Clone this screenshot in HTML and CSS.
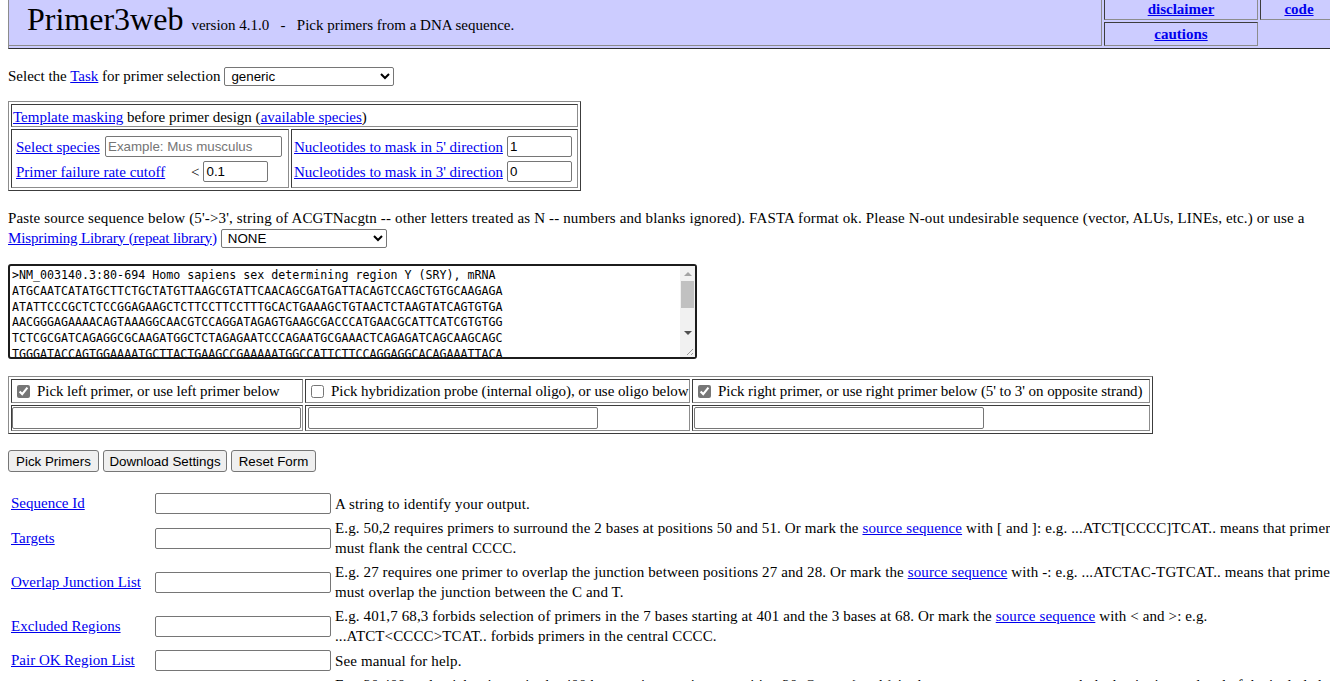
FILE: index.html
```html
<!DOCTYPE html>
<html lang="en">
<head>
<meta charset="utf-8">
<title>Primer3web version 4.1.0 - Pick primers from a DNA sequence</title>
<link rel="stylesheet" href="styles.css">
</head>
<body>
<header class="hdr">
  <div class="hdr-title"><span class="logo">Primer3web</span><span class="ver">version 4.1.0&nbsp;&nbsp; -&nbsp;&nbsp; Pick primers from a DNA sequence.</span></div>
  <div class="hdr-cell hdr-disc"><a href="#">disclaimer</a></div>
  <div class="hdr-cell hdr-code"><a href="#">code</a></div>
  <div class="hdr-cell hdr-caut"><a href="#">cautions</a></div>
</header>

<main class="page">
  <div class="taskrow">
    <span>Select the <a href="#">Task</a> for primer selection</span>
    <select class="sel sel-task"><option>generic</option></select>
  </div>

  <div class="mask">
    <div class="mcell mhead"><a href="#">Template masking</a> before primer design (<a href="#">available species</a>)</div>
    <div class="mcell mleft">
      <div class="mrow"><span class="ml w89"><a href="#">Select species</a></span><input class="inp w177" placeholder="Example: Mus musculus"></div>
      <div class="mrow"><span class="ml w175"><a href="#">Primer failure rate cutoff</a></span><span class="lt">&lt;</span><input class="inp w65" value="0.1"></div>
    </div>
    <div class="mcell mright">
      <div class="mrow"><span class="ml w213"><a href="#">Nucleotides to mask in 5' direction</a></span><input class="inp w65" value="1"></div>
      <div class="mrow"><span class="ml w213"><a href="#">Nucleotides to mask in 3' direction</a></span><input class="inp w65" value="0"></div>
    </div>
  </div>

  <div class="paste1">Paste source sequence below (5'-&gt;3', string of ACGTNacgtn -- other letters treated as N -- numbers and blanks ignored). FASTA format ok. Please N-out undesirable sequence (vector, ALUs, LINEs, etc.) or use a</div>
  <div class="paste2"><a class="mislib" href="#">Mispriming Library (repeat library)</a><select class="sel sel-lib"><option>NONE</option></select></div>

  <div class="ta-wrap">
    <textarea class="seq" spellcheck="false">&gt;NM_003140.3:80-694 Homo sapiens sex determining region Y (SRY), mRNA
ATGCAATCATATGCTTCTGCTATGTTAAGCGTATTCAACAGCGATGATTACAGTCCAGCTGTGCAAGAGA
ATATTCCCGCTCTCCGGAGAAGCTCTTCCTTCCTTTGCACTGAAAGCTGTAACTCTAAGTATCAGTGTGA
AACGGGAGAAAACAGTAAAGGCAACGTCCAGGATAGAGTGAAGCGACCCATGAACGCATTCATCGTGTGG
TCTCGCGATCAGAGGCGCAAGATGGCTCTAGAGAATCCCAGAATGCGAAACTCAGAGATCAGCAAGCAGC
TGGGATACCAGTGGAAAATGCTTACTGAAGCCGAAAAATGGCCATTCTTCCAGGAGGCACAGAAATTACA</textarea>
    <div class="sb" aria-hidden="true">
      <div class="sb-btn"><span class="tri-up"></span></div>
      <div class="sb-thumb"></div>
      <div class="sb-track"></div>
      <div class="sb-btn"><span class="tri-down"></span></div>
      <div class="sb-corner"><svg width="15" height="17" viewBox="0 0 15 17"><path d="M13 9 L7 15 M13 13 L11 15" stroke="#9a9a9a" stroke-width="1" fill="none"/></svg></div>
    </div>
  </div>

  <div class="picks">
    <div class="pk"><label class="pkl"><input type="checkbox" class="cb" checked>Pick left primer, or use left primer below</label></div>
    <div class="pk"><label class="pkl"><input type="checkbox" class="cb">Pick hybridization probe (internal oligo), or use oligo below</label></div>
    <div class="pk"><label class="pkl"><input type="checkbox" class="cb" checked>Pick right primer, or use right primer below (5' to 3' on opposite strand)</label></div>
    <div class="pk pl0"><input class="inp pinp"></div>
    <div class="pk pl2"><input class="inp pinp"></div>
    <div class="pk pl1"><input class="inp pinp"></div>
  </div>

  <div class="btns">
    <button class="btn b1" type="button">Pick Primers</button>
    <button class="btn b2" type="button">Download Settings</button>
    <button class="btn b3" type="button">Reset Form</button>
  </div>

  <div class="fields">
    <div class="f-label"><a href="#">Sequence Id</a></div>
    <div class="f-input"><input class="inp w176"></div>
    <div class="f-desc">A string to identify your output.</div>

    <div class="f-label"><a href="#">Targets</a></div>
    <div class="f-input"><input class="inp w176"></div>
    <div class="f-desc">E.g. 50,2 requires primers to surround the 2 bases at positions 50 and 51. Or mark the <a href="#">source sequence</a> with [ and ]: e.g. ...ATCT[CCCC]TCAT.. means that primers<br>must flank the central CCCC.</div>

    <div class="f-label"><a href="#">Overlap Junction List</a></div>
    <div class="f-input"><input class="inp w176"></div>
    <div class="f-desc">E.g. 27 requires one primer to overlap the junction between positions 27 and 28. Or mark the <a href="#">source sequence</a> with -: e.g. ...ATCTAC-TGTCAT.. means that primers<br>must overlap the junction between the C and T.</div>

    <div class="f-label"><a href="#">Excluded Regions</a></div>
    <div class="f-input"><input class="inp w176"></div>
    <div class="f-desc">E.g. 401,7 68,3 forbids selection of primers in the 7 bases starting at 401 and the 3 bases at 68. Or mark the <a href="#">source sequence</a> with &lt; and &gt;: e.g.<br>...ATCT&lt;CCCC&gt;TCAT.. forbids primers in the central CCCC.</div>

    <div class="f-label"><a href="#">Pair OK Region List</a></div>
    <div class="f-input"><input class="inp w176"></div>
    <div class="f-desc">See manual for help.</div>

    <div class="f-label"><a href="#">Included Region</a></div>
    <div class="f-input"><input class="inp w176"></div>
    <div class="f-desc">E.g. 20,400: only pick primers in the 400 base region starting at position 20. Or use { and } in the <a href="#">source sequence</a> to mark the beginning and end of the included region: e.g. in<br>ATC{TTC...TCT}AT the included region is TTC...TCT.</div>
  </div>
</main>
</body>
</html>
```

FILE: styles.css
```css
html {
  overflow: hidden;
}

body {
  margin: 0;
  font-family: "Liberation Serif", "Times New Roman", serif;
  font-size: 15px;
  color: #000;
  background: #fff;
}

a {
  color: #0000ee;
  text-decoration: underline;
}

/* ---------- header ---------- */
.hdr {
  display: grid;
  grid-template-columns: 1093px 154px 77px;
  grid-template-rows: 22px 24px;
  gap: 2px;
  width: max-content;
  margin: -3px 0 0 8px;
  padding: 1px 0 2px 0;
  background: #ccccff;
  border-left: 1px solid #8c8c8c;
  border-bottom: 1px solid #2e2e2e;
}

.hdr-title {
  grid-row: 1 / 3;
  display: flex;
  align-items: baseline;
  padding: 3px 0 0 18px;
  border-right: 1px solid #8c8c8c;
  border-bottom: 1px solid #8c8c8c;
  white-space: nowrap;
}

.logo {
  font-size: 32px;
  line-height: 36px;
}

.ver {
  font-size: 15px;
  margin-left: 8px;
}

.hdr-cell {
  display: flex;
  align-items: center;
  justify-content: center;
  border: 1px solid;
  border-color: #3c3c3c #8c8c8c #8c8c8c #3c3c3c;
  font-weight: bold;
}

.hdr-caut {
  padding-top: 1px;
}

.hdr-code {
  border-right: 0;
}

/* ---------- task row ---------- */
.page {
  padding: 0 8px;
}

.taskrow {
  margin-top: 17px;
  height: 20px;
  display: flex;
  align-items: center;
  gap: 4px;
  white-space: nowrap;
}

.sel {
  font: 13.33px "Liberation Sans", Arial, sans-serif;
  height: 19px;
  margin: 0;
  padding: 0 0 0 2px;
  border: 1px solid #767676;
  border-radius: 2px;
  background: #fff;
  color: #000;
  box-sizing: border-box;
}

.sel-task {
  width: 170px;
}

.sel-lib {
  width: 166px;
}

/* ---------- masking table ---------- */
.mask {
  display: grid;
  grid-template-columns: 278px 287px;
  grid-template-rows: 23px 59px;
  gap: 2px;
  padding: 2px;
  width: max-content;
  margin-top: 15px;
  border: 1px solid;
  border-color: #8c8c8c #3c3c3c #3c3c3c #8c8c8c;
}

.mcell {
  border: 1px solid;
  border-color: #3c3c3c #8c8c8c #8c8c8c #3c3c3c;
  box-sizing: border-box;
}

.mhead {
  grid-column: 1 / 3;
  line-height: 18px;
  padding: 3px 1px 0;
  white-space: nowrap;
}

.mleft,
.mright {
  display: flex;
  flex-direction: column;
  gap: 4px;
  padding: 6px 0 0 4px;
}

.mright {
  padding-left: 2px;
}

.mrow {
  display: flex;
  align-items: center;
  height: 21px;
}

.ml {
  display: inline-block;
  white-space: nowrap;
  padding-top: 1px;
}

.w89 { width: 89px; }
.w175 { width: 175px; }
.w213 { width: 213px; }

.lt {
  margin-right: 4px;
  padding-top: 1px;
}

.inp {
  font: 13.33px "Liberation Sans", Arial, sans-serif;
  height: 21px;
  box-sizing: border-box;
  margin: 0;
  padding: 1px 2px;
  border: 1px solid #767676;
  border-radius: 2px;
  background: #fff;
  color: #000;
}

.inp::placeholder {
  color: #757575;
}

.w177 { width: 177px; }
.w176 { width: 176px; }
.w65 { width: 65px; }

/* ---------- paste text ---------- */
.paste1 {
  margin-top: 18px;
  height: 18px;
  line-height: 18px;
  white-space: nowrap;
  letter-spacing: 0.135px;
}

.paste2 {
  margin-top: 1px;
  height: 20px;
  display: flex;
  align-items: center;
  gap: 4px;
  white-space: nowrap;
}

.mislib {
  letter-spacing: -0.14px;
}

/* ---------- sequence textarea ---------- */
.ta-wrap {
  position: relative;
  width: 689px;
  height: 95px;
  margin-top: 16px;
}

.seq {
  display: block;
  box-sizing: border-box;
  width: 689px;
  height: 95px;
  margin: 0;
  padding: 2px 2px 0;
  border: 2px solid #1c1c1c;
  border-radius: 3px;
  font: 11.65px/15.8px "DejaVu Sans Mono", "Liberation Mono", monospace;
  color: #000;
  background: #fff;
  resize: none;
  overflow: hidden;
  white-space: pre;
  outline: none;
}

.sb {
  position: absolute;
  top: 2px;
  right: 2px;
  bottom: 2px;
  width: 15px;
  display: flex;
  flex-direction: column;
  background: #f1f1f1;
}

.sb-btn {
  height: 15px;
  display: flex;
  align-items: center;
  justify-content: center;
}

.tri-up {
  width: 0;
  height: 0;
  border-left: 4px solid transparent;
  border-right: 4px solid transparent;
  border-bottom: 4px solid #a3a3a3;
}

.tri-down {
  width: 0;
  height: 0;
  border-left: 4px solid transparent;
  border-right: 4px solid transparent;
  border-top: 4px solid #505050;
}

.sb-thumb {
  height: 27px;
  margin: 0 1px;
  background: #c1c1c1;
}

.sb-track {
  flex: 1;
}

.sb-corner {
  height: 17px;
  background: #f1f1f1;
}

.sb-corner svg {
  display: block;
}

/* ---------- pick checkboxes ---------- */
.picks {
  display: grid;
  grid-template-columns: 292px 385px 458px;
  grid-template-rows: 24px 26px;
  gap: 2px;
  padding: 2px;
  width: max-content;
  margin-top: 17px;
  border: 1px solid;
  border-color: #8c8c8c #3c3c3c #3c3c3c #8c8c8c;
}

.pk {
  display: flex;
  align-items: center;
  box-sizing: border-box;
  padding: 0 1px;
  border: 1px solid;
  border-color: #3c3c3c #8c8c8c #8c8c8c #3c3c3c;
  white-space: nowrap;
  overflow: hidden;
}

.pkl {
  display: flex;
  align-items: center;
  padding-top: 1px;
  letter-spacing: -0.06px;
}

.cb {
  width: 13px;
  height: 13px;
  margin: 0 7px 0 4px;
  accent-color: #767676;
}

.pl0 { padding-left: 0; }
.pl1 { padding-left: 1px; }
.pl2 { padding-left: 2px; }

.pinp {
  width: 290px;
  height: 22px;
}

/* ---------- buttons ---------- */
.btns {
  margin-top: 16px;
  display: flex;
  gap: 4px;
}

.btn {
  font: 13.33px "Liberation Sans", Arial, sans-serif;
  height: 22px;
  margin: 0;
  padding: 0;
  border: 1px solid #767676;
  border-radius: 3px;
  background: #efefef;
  color: #000;
  text-align: center;
}

.b1 { width: 91px; }
.b2 { width: 124px; }
.b3 { width: 85px; }

/* ---------- fields ---------- */
.fields {
  display: grid;
  grid-template-columns: 142px 178px max-content;
  align-items: center;
  gap: 2px;
  padding: 2px;
  margin-top: 18px;
}

.f-label {
  padding-left: 1px;
  white-space: nowrap;
}

.f-input {
  padding: 1px;
}

.f-input .inp {
  display: block;
}

.f-desc {
  padding: 1px;
  line-height: 20px;
  white-space: nowrap;
  letter-spacing: 0.12px;
}
```
